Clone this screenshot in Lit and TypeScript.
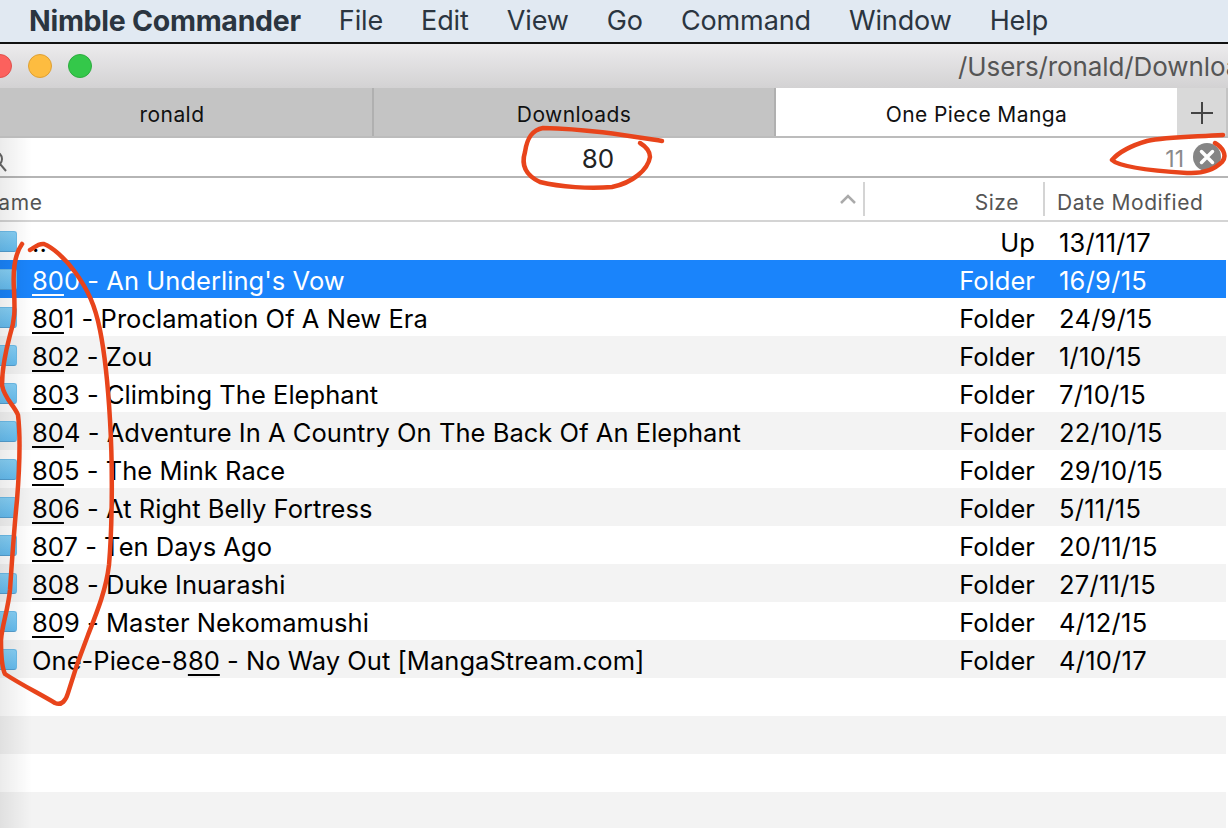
import { LitElement, html, css, svg } from "lit";
import { customElement } from "lit/decorators.js";

type Row = { pre: string; u: string; post: string; size: string; date: string };
const rows: Row[] = [
  { pre: "", u: "", post: "..", size: "Up", date: "13/11/17" },
  { pre: "", u: "80", post: "0 - An Underling's Vow", size: "Folder", date: "16/9/15" },
  { pre: "", u: "80", post: "1 - Proclamation Of A New Era", size: "Folder", date: "24/9/15" },
  { pre: "", u: "80", post: "2 - Zou", size: "Folder", date: "1/10/15" },
  { pre: "", u: "80", post: "3 - Climbing The Elephant", size: "Folder", date: "7/10/15" },
  { pre: "", u: "80", post: "4 - Adventure In A Country On The Back Of An Elephant", size: "Folder", date: "22/10/15" },
  { pre: "", u: "80", post: "5 - The Mink Race", size: "Folder", date: "29/10/15" },
  { pre: "", u: "80", post: "6 - At Right Belly Fortress", size: "Folder", date: "5/11/15" },
  { pre: "", u: "80", post: "7 - Ten Days Ago", size: "Folder", date: "20/11/15" },
  { pre: "", u: "80", post: "8 - Duke Inuarashi", size: "Folder", date: "27/11/15" },
  { pre: "", u: "80", post: "9 - Master Nekomamushi", size: "Folder", date: "4/12/15" },
  { pre: "One-Piece-8", u: "80", post: " - No Way Out [MangaStream.com]", size: "Folder", date: "4/10/17" },
];
const menus = ["File", "Edit", "View", "Go", "Command", "Window", "Help"];

@customElement("app-root")
export class AppRoot extends LitElement {
  static styles = css`
    :host { display: block; position: relative; width: 1228px; height: 828px; overflow: hidden; background: #fff;
      font-family: Inter, "Liberation Sans", sans-serif; color: #000; }
    .menubar { background: #e1e9f2; border-bottom: 2px solid #111; display: flex; align-items: center;
      padding-left: 29px; padding-bottom: 2px; box-sizing: content-box; height: 40px; gap: 38px; color: #2b3540; font-size: 27px; letter-spacing: -0.12px; }
    .menubar b { font-weight: 700; font-size: 28.5px; letter-spacing: -0.28px; }
    .titlebar { height: 44px; background: linear-gradient(#ecebed, #d3d2d3); display: flex; align-items: center; }
    .light { width: 24px; height: 24px; border-radius: 50%; box-sizing: border-box; flex: none; }
    .lights { display: flex; gap: 16px; margin-left: -12px; flex: none; }
    .red { background: #fc615d; border: 1px solid #e0504c; }
    .yellow { background: #fdbc40; border: 1px solid #dea034; }
    .green { background: #34c84a; border: 1px solid #2dac3f; }
    .path { margin-left: 866px; white-space: nowrap; font-size: 26px; letter-spacing: -0.1px; color: #555; }
    .tabs { height: 50px; background: #c4c4c4; display: flex; margin-left: -28px; border-bottom: 2px solid #bcbcbc; box-sizing: border-box; font-size: 21px; letter-spacing: 0.42px; }
    .tab { width: 400px; flex: none; display: flex; align-items: center; justify-content: center; color: #111; border-right: 2px solid #b0b0b0; box-sizing: content-box; padding-top: 4px; height: 44px; }
    .tab.active { background: #fff; border-right: none; width: 401px; }
    .plus { width: 49px; flex: none; background: #d9d9d9; display: flex; align-items: center; justify-content: center; padding-top: 2px; box-sizing: border-box; }
    .tabs-wrap { overflow: hidden; }
    .search { border-bottom: 2px solid #b5b5b5; position: relative; display: flex; align-items: center; justify-content: center; font-size: 26px; color: #222; background: #fff; padding: 3px 32px 0 0; box-sizing: content-box; height: 35px; }
    .search .glass { position: absolute; left: -13px; top: 13px; }
    .count { position: absolute; right: 44px; top: 7px; font-size: 23px; color: #8a8a8a; }
    .clear { position: absolute; right: 7px; top: 5px; }
    .head { height: 42px; border-bottom: 2px solid #d4d4d4; display: flex; align-items: center; color: #555; font-size: 21px; letter-spacing: 0.55px; }
    .h-name { flex: 1; margin-left: -18px; display: flex; align-items: center; justify-content: space-between; height: 34px; padding: 6px 7px 0 0; box-sizing: border-box; }
    .h-name svg { margin-top: -6px; }
    .h-size { width: 182px; height: 34px; flex: none; box-sizing: border-box; border-left: 2px solid #d4d4d4; border-right: 2px solid #d4d4d4; display: flex; align-items: center; justify-content: flex-end; padding: 6px 24px 0 0; }
    .h-date { width: 183px; height: 34px; flex: none; box-sizing: border-box; padding: 6px 0 0 12px; display: flex; align-items: center; }
    .row { height: 38px; display: flex; align-items: center; font-size: 25.5px; letter-spacing: 0.04px; margin-right: 2px; position: relative; padding-top: 2px; box-sizing: border-box; }
    .row.alt { background: #f3f3f3; }
    .row.sel { background: #1a84fb; color: #fff; }
    .folder { position: absolute; left: -14px; top: 9px; width: 31px; height: 21px; border-radius: 3px; box-sizing: border-box;
      background: linear-gradient(#86d0f6, #66bdf0); border: 1px solid #6dbce9; border-bottom-color: #559fd0; }
    .name { position: absolute; left: 32px; white-space: pre; }
    .name u { text-underline-offset: 4px; text-decoration-thickness: 2px; }
    .size { position: absolute; right: 191px; }
    .date { position: absolute; left: 1059px; letter-spacing: 0.25px; }
    .shade { position: absolute; left: 0; top: 138px; bottom: 0; width: 32px; background: linear-gradient(90deg, rgba(0,0,0,.08), rgba(0,0,0,0)); pointer-events: none; }
    .ink { position: absolute; left: 0; top: 0; width: 1228px; height: 828px; pointer-events: none; }
  `;

  render() {
    return html`
      <div class="menubar"><b>Nimble Commander</b>${menus.map((m) => html`<span>${m}</span>`)}</div>
      <div class="titlebar">
        <div class="lights"><div class="light red"></div><div class="light yellow"></div><div class="light green"></div></div>
        <div class="path">/Users/ronald/Downloads/One Piece Manga</div>
      </div>
      <div class="tabs-wrap"><div class="tabs">
        <div class="tab">ronald</div><div class="tab">Downloads</div><div class="tab active">One Piece Manga</div>
        <div class="plus"><svg width="22" height="22" viewBox="0 0 22 22"><path d="M11 0V22M0 11H22" stroke="#444" stroke-width="2"/></svg></div>
      </div></div>
      <div class="search">
        <svg class="glass" width="20" height="22" viewBox="0 0 20 22" fill="none" stroke="#666" stroke-width="2"><circle cx="8" cy="8" r="7"/><path d="M13 13L19 20"/></svg>
        <span class="q">80</span>
        <span class="count">11</span>
        <svg class="clear" width="28" height="28" viewBox="0 0 28 28"><circle cx="14" cy="14" r="14" fill="#858585"/><path d="M8.500 8.500L19.500 19.500M19.500 8.500L8.500 19.500" stroke="#fff" stroke-width="3.500" stroke-linecap="round"/></svg>
      </div>
      <div class="head">
        <div class="h-name"><span>Name</span><svg width="16" height="10" viewBox="0 0 16 10" fill="none" stroke="#aaa" stroke-width="2.500"><path d="M1 9L8 2L15 9"/></svg></div>
        <div class="h-size">Size</div>
        <div class="h-date">Date Modified</div>
      </div>
      ${rows.map((r, i) => html`<div class="row ${i === 1 ? "sel" : i % 2 ? "alt" : ""}">
        <div class="folder"></div>
        <span class="name">${r.pre}${r.u ? html`<u>${r.u}</u>` : ""}${r.post}</span>
        <span class="size">${r.size}</span><span class="date">${r.date}</span>
      </div>`)}
      <div class="row"></div><div class="row alt"></div><div class="row"></div><div class="row alt"></div>
      <div class="shade"></div>
      <svg class="ink" viewBox="0 0 1228 828" fill="none" stroke="#e8441b" stroke-width="4.500" stroke-linecap="round" stroke-linejoin="round">
        ${svg`<path d="M22 244C14 255 13 275 14 290C15 310 15 320 10 335C6 350 2 370 2 385C4 398 14 405 18 415C21 440 19 475 17 500C14 530 12 560 10 590C8 610 2 625 1 640C1 660 2 668 5 674C20 684 40 694 55 703C62 706 66 700 68 693C73 676 80 655 88 635C97 612 106 590 109 565C112 530 113 470 110 420C108 385 104 350 100 330C95 305 88 290 75 272C65 258 52 247 44 244C38 243 34 248 30 250"/>
        <path d="M662 141C630 136 590 129 543 128C532 130 527 138 525 152C521 165 525 175 540 182C560 187 590 189 612 187C632 183 648 170 650 157C650 150 645 146 640 143"/>
        <path d="M1223 135C1190 137 1165 137 1147 141C1130 146 1118 153 1112 160C1118 166 1140 170 1187 173C1205 174 1216 168 1222 162C1228 155 1222 147 1215 143"/>`}
      </svg>
    `;
  }
}
